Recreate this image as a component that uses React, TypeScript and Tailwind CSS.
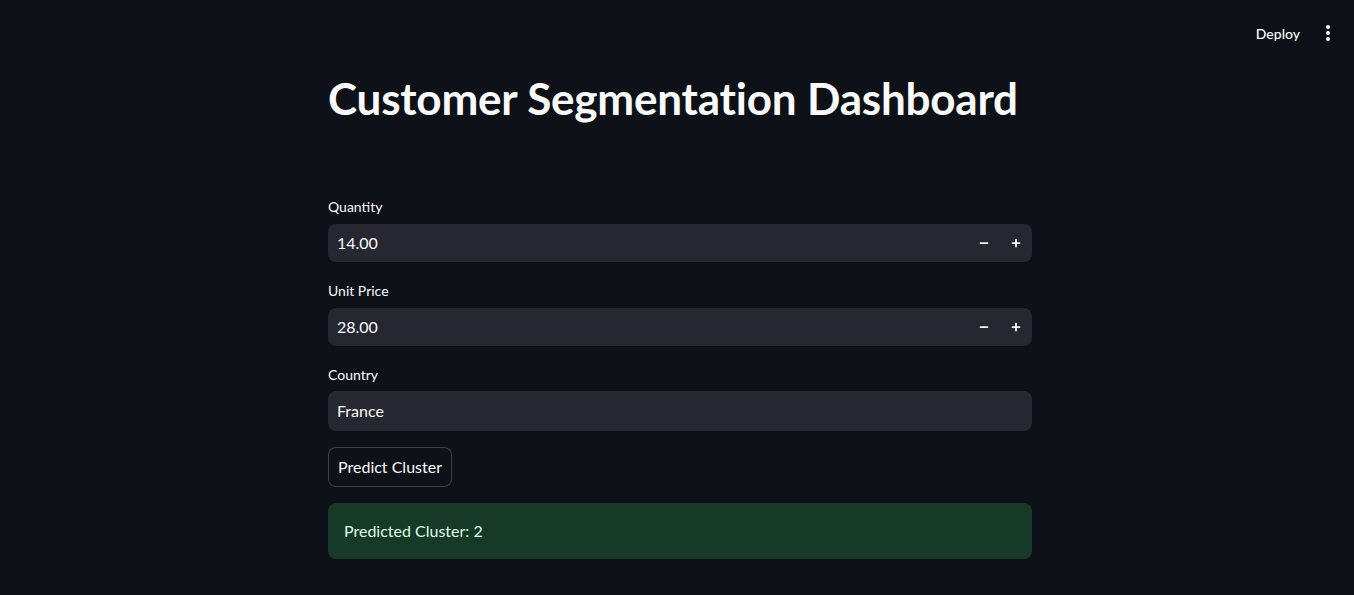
import { Minus, Plus } from "lucide-react";

const font = { fontFamily: "Lato, 'Noto Sans', sans-serif" };

function NumberInput({ label, value }: { label: string; value: string }) {
  return (
    <div className="flex flex-col">
      <label className="h-[22px] text-[14px] leading-[22px] text-[#fafafa]">{label}</label>
      <div className="mt-[6px] flex h-[38px] items-center rounded-[8px] bg-[#262730] pl-[9px]">
        <span className="flex-1 text-[16px] text-[#fafafa]">{value}</span>
        <button className="flex h-[38px] w-[32px] items-center justify-center text-[#fafafa]">
          <Minus size={12} strokeWidth={3.5} />
        </button>
        <button className="flex h-[38px] w-[32px] items-center justify-center text-[#fafafa]">
          <Plus size={12} strokeWidth={3.5} />
        </button>
      </div>
    </div>
  );
}

export default function App() {
  return (
    <div className="min-h-[595px] bg-[#0e1117] text-[#fafafa]" style={font}>
      <header className="flex h-[66px] items-center justify-end gap-[18px] pr-[16px]">
        <span className="text-[14px] font-medium">Deploy</span>
        <span className="flex h-[32px] w-[20px] flex-col items-center justify-center gap-[2.5px]">
          <span className="h-[3.5px] w-[3.5px] rounded-full bg-[#fafafa]" />
          <span className="h-[3.5px] w-[3.5px] rounded-full bg-[#fafafa]" />
          <span className="h-[3.5px] w-[3.5px] rounded-full bg-[#fafafa]" />
        </span>
      </header>

      <main className="ml-[328px] flex w-[704px] flex-col">
        <h1 className="mt-[6px] text-[44px] leading-[52px] font-bold tracking-[-0.2px]">
          Customer Segmentation Dashboard
        </h1>

        <div className="mt-[72px] flex flex-col gap-[18px]">
          <NumberInput label="Quantity" value="14.00" />
          <NumberInput label="Unit Price" value="28.00" />
          <div className="flex flex-col">
            <label className="h-[22px] text-[14px] leading-[22px]">Country</label>
            <div className="mt-[5px] flex h-[40px] items-center rounded-[8px] bg-[#262730] px-[9px] text-[16px]">
              France
            </div>
          </div>
        </div>

        <button className="mt-[16px] h-[40px] w-[124px] rounded-[8px] border border-[#fafafa33] bg-[#0e1117] text-[16px]">
          Predict Cluster
        </button>

        <div className="mt-[16px] flex h-[56px] items-center rounded-[8px] bg-[#173928] px-[16px] text-[16px] text-[#dffde9]">
          Predicted Cluster: 2
        </div>
      </main>
    </div>
  );
}
